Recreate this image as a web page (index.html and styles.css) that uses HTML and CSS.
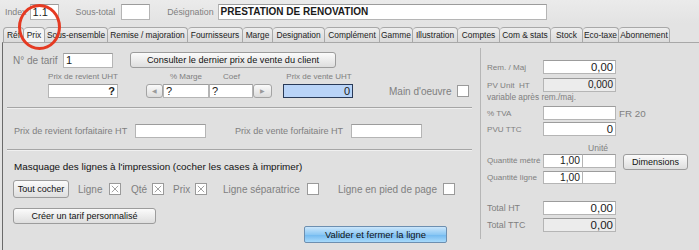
FILE: index.html
```html
<!DOCTYPE html>
<html lang="fr">
<head>
<meta charset="utf-8">
<title>Prix</title>
<link rel="stylesheet" href="styles.css">
</head>
<body>
  <div class="topbar">
    <span class="lbl">Index</span>
    <div class="field f-index">1.1</div>
    <span class="lbl lbl-sous">Sous-total</span>
    <div class="field f-sous"></div>
    <span class="lbl lbl-desig">Désignation</span>
    <div class="field f-desig">PRESTATION DE RENOVATION</div>
  </div>

  <div class="tabs">
    <div class="tab">Réf</div>
    <div class="tab active">Prix</div>
    <div class="tab">Sous-ensemble</div>
    <div class="tab">Remise / majoration</div>
    <div class="tab">Fournisseurs</div>
    <div class="tab">Marge</div>
    <div class="tab">Designation</div>
    <div class="tab">Complément</div>
    <div class="tab">Gamme</div>
    <div class="tab">Illustration</div>
    <div class="tab">Comptes</div>
    <div class="tab">Com &amp; stats</div>
    <div class="tab">Stock</div>
    <div class="tab">Eco-taxe</div>
    <div class="tab">Abonnement</div>
  </div>

  <div class="main">
    <div class="left">
      <div class="row r-tarif">
        <span class="lbl lbl-tarif">N° de tarif</span>
        <div class="field f-tarif">1</div>
        <div class="btn b-consult">Consulter le dernier prix de vente du client</div>
      </div>

      <div class="row r-heads">
        <span class="head h-revient">Prix de revient UHT</span>
        <span class="head h-marge">% Marge</span>
        <span class="head h-coef">Coef</span>
        <span class="head h-vente">Prix de vente UHT</span>
      </div>

      <div class="row r-prices">
        <div class="field num bold f-revient">?</div>
        <div class="stepper">
          <div class="arrow">&#9664;</div>
          <div class="field f-marge">?</div>
          <div class="field f-coef">?</div>
          <div class="arrow">&#9654;</div>
        </div>
        <div class="field num f-vente">0</div>
        <span class="lbl lbl-mo">Main d'oeuvre</span>
        <div class="check"></div>
      </div>

      <div class="sep"></div>

      <div class="row r-forfait">
        <span class="lbl lbl-frev">Prix de revient forfaitaire HT</span>
        <div class="field f-forf"></div>
        <span class="lbl lbl-fvente">Prix de vente forfaitaire HT</span>
        <div class="field f-forf"></div>
      </div>

      <div class="sep sep-2"></div>

      <div class="masq">Masquage des lignes à l'impression (cocher les cases à imprimer)</div>

      <div class="row r-checks">
        <div class="btn b-tout">Tout cocher</div>
        <span class="lbl ck-ligne">Ligne</span>
        <div class="check"><svg viewBox="0 0 10 10"><path d="M1 1L9 9M9 1L1 9"/></svg></div>
        <span class="lbl ck-qte">Qté</span>
        <div class="check"><svg viewBox="0 0 10 10"><path d="M1 1L9 9M9 1L1 9"/></svg></div>
        <span class="lbl ck-prix">Prix</span>
        <div class="check"><svg viewBox="0 0 10 10"><path d="M1 1L9 9M9 1L1 9"/></svg></div>
        <span class="lbl ck-sep">Ligne séparatrice</span>
        <div class="check"></div>
        <span class="lbl ck-pied">Ligne en pied de page</span>
        <div class="check"></div>
      </div>

      <div class="btn b-creer">Créer un tarif personnalisé</div>
      <div class="btn b-valider">Valider et fermer la ligne</div>
    </div>

    <div class="right">
      <div class="rrow rr-rem">
        <span class="rlbl">Rem. / Maj</span>
        <div class="field num rfield">0,00</div>
      </div>
      <div class="rrow rr-pv">
        <span class="rlbl">PV Unit&nbsp; HT</span>
        <div class="field num rfield grey pv">0,000</div>
      </div>
      <div class="note">variable après rem./maj.</div>
      <div class="rrow rr-tva">
        <span class="rlbl">% TVA</span>
        <div class="field num rfield"></div>
        <span class="fr">FR 20</span>
      </div>
      <div class="rrow rr-pvu">
        <span class="rlbl">PVU TTC</span>
        <div class="field num rfield">0</div>
      </div>
      <div class="unite">Unité</div>
      <div class="rrow rr-qm">
        <span class="rlbl">Quantité métré</span>
        <div class="field num qfield">1,00</div>
        <div class="field ufield"></div>
        <div class="btn b-dim">Dimensions</div>
      </div>
      <div class="rrow rr-ql">
        <span class="rlbl">Quantité ligne</span>
        <div class="field num qfield">1,00</div>
        <div class="field ufield"></div>
      </div>
      <div class="rrow rr-tht">
        <span class="rlbl big">Total HT</span>
        <div class="field num rfield total">0,00</div>
      </div>
      <div class="rrow rr-tttc">
        <span class="rlbl big">Total TTC</span>
        <div class="field num rfield total grey">0,00</div>
      </div>
    </div>
  </div>

  <div class="ring"></div>
</body>
</html>
```

FILE: styles.css
```css
* {
  box-sizing: border-box;
}

body {
  margin: 0;
  width: 699px;
  height: 250px;
  overflow: hidden;
  position: relative;
  background-color: #e3e3e3;
  font-family: "Liberation Sans", Arial, sans-serif;
  font-size: 10px;
  color: #1a1a1a;
}

/* top bar */
.topbar {
  display: flex;
  align-items: center;
  height: 23px;
  padding: 1px 0 0 5px;
  background: linear-gradient(#ebebeb, #e3e3e3);
}

.lbl {
  color: #7f7f7f;
  font-size: 10px;
  white-space: nowrap;
}

.field {
  background-color: #fff;
  border: 1px solid #b5b5b5;
  border-top-color: #9c9c9c;
  height: 14px;
  padding: 0 2px;
  font-size: 11px;
  line-height: 12px;
  white-space: nowrap;
  overflow: hidden;
}

.num {
  text-align: right;
}

.bold {
  font-weight: bold;
}

.grey {
  background-color: #ececec;
}

.topbar .lbl {
  font-size: 8.8px;
}

.f-index {
  width: 29px;
  height: 16px;
  margin-left: 3px;
  line-height: 14px;
  font-size: 11px;
}

.lbl-sous {
  margin-left: 17px;
}

.f-sous {
  width: 29px;
  height: 16px;
  margin-left: 6px;
}

.lbl-desig {
  margin-left: 17px;
}

.f-desig {
  width: 329px;
  height: 16px;
  margin-left: 4px;
  font-weight: bold;
  font-size: 10px;
  line-height: 14px;
}

/* tabs */
.tabs {
  display: flex;
  height: 15px;
  margin: 4px 0 0 3px;
}

.tab {
  height: 15px;
  border: 1px solid #a8a8a8;
  border-bottom: none;
  border-left: none;
  border-radius: 4px 4px 0 0;
  background: linear-gradient(#eeeeee, #dadada);
  font-size: 8.4px;
  line-height: 14px;
  text-align: center;
  white-space: nowrap;
  overflow: hidden;
  color: #222;
}

.tab:first-child {
  border-left: 1px solid #a8a8a8;
}

.tab.active {
  background: #f4f4f4;
}

.tab:nth-child(1) { width: 21px; }
.tab:nth-child(2) { width: 21px; }
.tab:nth-child(3) { width: 63px; }
.tab:nth-child(4) { width: 80px; }
.tab:nth-child(5) { width: 55px; }
.tab:nth-child(6) { width: 30px; }
.tab:nth-child(7) { width: 52px; }
.tab:nth-child(8) { width: 55px; }
.tab:nth-child(9) { width: 33px; }
.tab:nth-child(10) { width: 45px; }
.tab:nth-child(11) { width: 42px; }
.tab:nth-child(12) { width: 51px; }
.tab:nth-child(13) { width: 32px; }
.tab:nth-child(14) { width: 36px; }
.tab:nth-child(15) { width: 51px; }

/* main panel */
.main {
  display: flex;
  height: 208px;
  margin-left: 2px;
  border-top: 1px solid #a8a8a8;
  border-left: 1px solid #6a6a6a;
  background-color: #e0e0e0;
}

.left {
  width: 477px;
  padding-left: 10px;
}

.row {
  display: flex;
  align-items: center;
}

.btn {
  border: 1px solid #9c9c9c;
  border-radius: 3px;
  background: linear-gradient(#fbfbfb, #dedede);
  font-size: 9px;
  text-align: center;
  color: #111;
  white-space: nowrap;
}

.r-tarif {
  margin-top: 9px;
  height: 16px;
}

.lbl-tarif {
  width: 50px;
}

.f-tarif {
  width: 50px;
  height: 15px;
  line-height: 13px;
  font-size: 11px;
}

.b-consult {
  width: 206px;
  height: 16px;
  margin-left: 17px;
  line-height: 14px;
  font-size: 9.2px;
}

.r-heads {
  margin-top: 3px;
  height: 11px;
}

.head {
  color: #7f7f7f;
  font-size: 8px;
  white-space: nowrap;
}

.h-revient {
  width: 70px;
  margin-left: 35px;
  text-align: center;
}

.h-marge {
  margin-left: 52px;
  width: 32px;
}

.h-coef {
  margin-left: 21px;
  width: 20px;
}

.h-vente {
  margin-left: 41px;
  width: 70px;
  text-align: center;
}

.r-prices {
  margin-top: 2px;
  height: 14px;
}

.f-revient {
  width: 70px;
  margin-left: 35px;
  font-size: 11px;
}

.stepper {
  display: flex;
  margin-left: 28px;
  height: 14px;
}

.arrow {
  width: 17px;
  height: 14px;
  border: 1px solid #a3a3a3;
  border-radius: 3px;
  background: linear-gradient(#fafafa, #dcdcdc);
  color: #9a9a9a;
  font-size: 6px;
  line-height: 12px;
  text-align: center;
}

.arrow:last-child {
  width: 19px;
}

.f-marge {
  width: 46px;
}

.f-coef {
  width: 44px;
}

.f-vente {
  width: 70px;
  margin-left: 11px;
  background-color: #b9d4f8;
  border: 1px solid #283a58;
}

.lbl-mo {
  margin-left: 36px;
  width: 68px;
}

.check {
  width: 12px;
  height: 12px;
  padding: 1px;
  background-color: #fff;
  border: 1px solid #9a9a9a;
}

.check svg {
  display: block;
  width: 8px;
  height: 8px;
}

.check path {
  stroke: #8a8a8a;
  stroke-width: 1;
  fill: none;
}

.sep {
  margin: 9px 0 0 -6px;
  width: 465px;
  border-top: 1px solid #a6a6a6;
  border-bottom: 1px solid #f0f0f0;
}

.r-forfait {
  margin-top: 15px;
  height: 14px;
}

.lbl-frev {
  margin-left: 1px;
  width: 121px;
  font-size: 9.1px;
}

.f-forf {
  width: 71px;
}

.lbl-fvente {
  margin-left: 29px;
  width: 116px;
  font-size: 9.1px;
}

.sep-2 {
  margin-top: 11px;
}

.masq {
  margin: 10px 0 0 1px;
  height: 13px;
  font-size: 9.9px;
  color: #111;
}

.r-checks {
  margin-top: 6px;
  height: 18px;
}

.b-tout {
  width: 56px;
  height: 18px;
  line-height: 16px;
}

.ck-ligne { margin-left: 9px; width: 31px; }
.ck-qte { margin-left: 10px; width: 21px; }
.ck-prix { margin-left: 9px; width: 22px; }
.ck-sep { margin-left: 16px; width: 84px; }
.ck-pied { margin-left: 19px; width: 105px; }

.b-creer {
  margin-top: 10px;
  width: 143px;
  height: 16px;
  line-height: 14px;
}

.b-valider {
  margin: 2px 0 0 291px;
  width: 143px;
  height: 17px;
  line-height: 15px;
  font-size: 9.4px;
  border-color: #6d8fb0;
  border-radius: 2px;
  background: linear-gradient(#cbe6fb, #8cc8f4 50%, #70b8ef 51%, #a8dafb);
}

/* right column */
.right {
  flex: 1;
  height: 191px;
  margin-top: 5px;
  padding-left: 6px;
  border-left: 1px solid #b6b6b6;
}

.rrow {
  display: flex;
  align-items: center;
  height: 14px;
}

.rlbl {
  width: 56px;
  color: #7f7f7f;
  font-size: 8.1px;
  white-space: nowrap;
}

.rlbl.big {
  font-size: 8.9px;
}

.rfield {
  width: 73px;
  font-size: 11.3px;
}

.pv {
  font-size: 10px;
}

.total {
  font-size: 11.5px;
}

.rr-rem { margin-top: 12px; }
.rr-pv { margin-top: 4px; }

.note {
  height: 11px;
  color: #7f7f7f;
  font-size: 8.3px;
  line-height: 11px;
}

.rr-tva { margin-top: 3px; }
.rr-pvu { margin-top: 2px; }

.fr {
  margin-left: 3px;
  color: #7f7f7f;
  font-size: 9.8px;
}

.unite {
  margin: 7px 0 0 101px;
  height: 10px;
  color: #7f7f7f;
  font-size: 8.6px;
}

.rr-qm {
  margin-top: 1px;
  height: 16px;
  align-items: flex-start;
}

.rr-qm .rlbl {
  line-height: 14px;
}

.qfield {
  width: 40px;
  font-size: 10.3px;
}

.ufield {
  width: 33px;
  border-left: none;
}

.b-dim {
  width: 65px;
  height: 16px;
  margin-left: 7px;
  line-height: 14px;
}

.rr-ql { margin-top: 1px; height: 13px; }
.rr-ql .field { height: 13px; line-height: 11px; }

.rr-tht { margin-top: 17px; }
.rr-tttc { margin-top: 3px; }

/* red annotation ring */
.ring {
  position: absolute;
  left: 18px;
  top: 4px;
  width: 43px;
  height: 46px;
  border: 3px solid #e53a22;
  border-radius: 50%;
}
```
